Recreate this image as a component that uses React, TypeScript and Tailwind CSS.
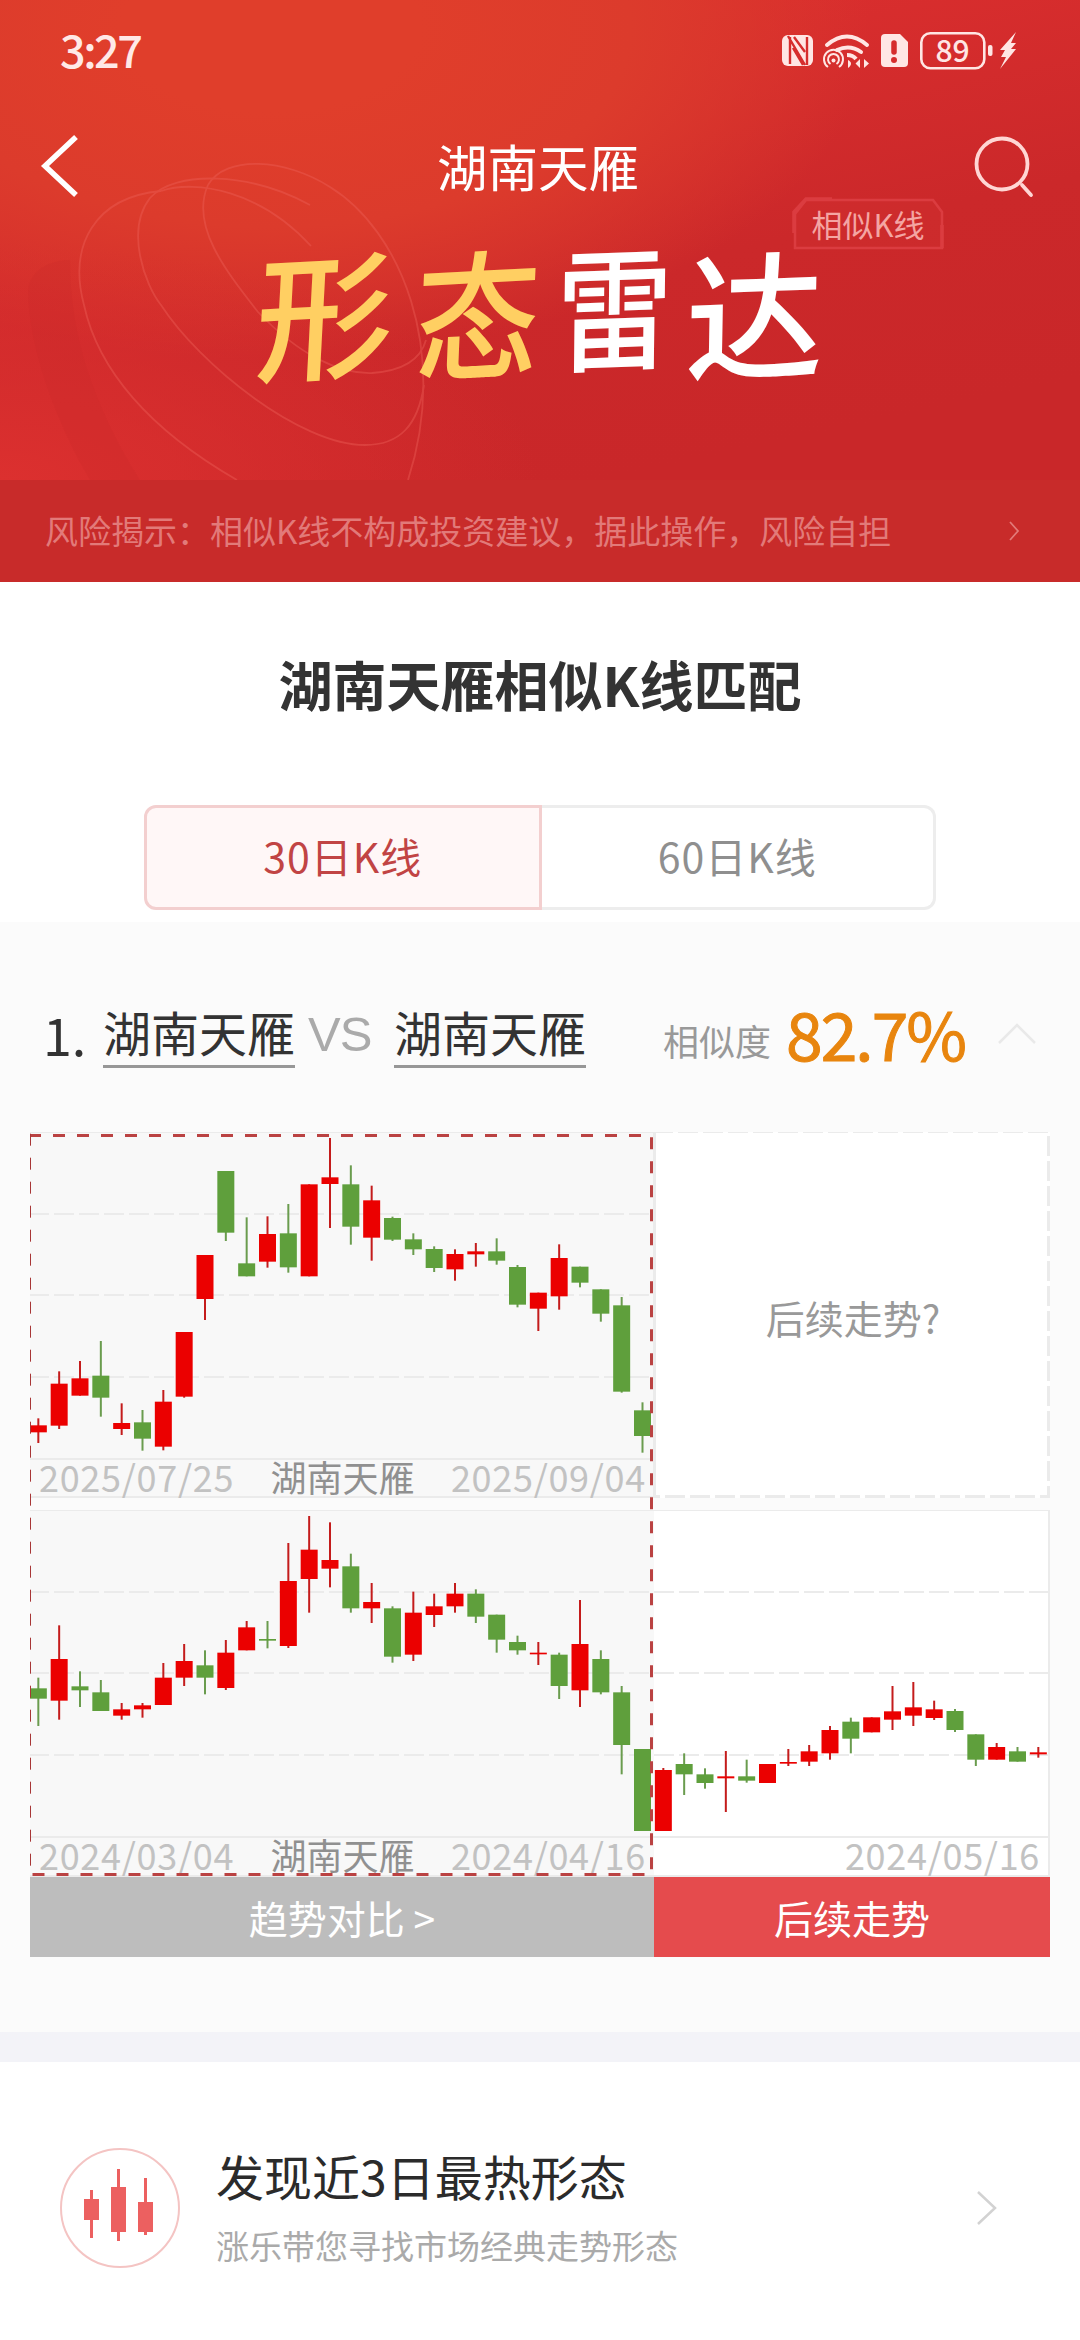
import { useState } from "react";
import clsx from "clsx";

// direction, high, body top, body bottom, low
type Candle = ["r" | "g", number, number, number, number];

const RED = "#eb0000";
const GREEN = "#5f9f3c";
const RED_WICK = "#c41c1c";
const GREEN_WICK = "#6a9c4e";
const SLOT = 62.5;

const current: Candle[] = [
  ["r", 895, 916, 937, 969],
  ["r", 754, 791, 917, 927],
  ["r", 723, 775, 827, 827],
  ["g", 663, 767, 833, 890],
  ["r", 850, 909, 927, 945],
  ["g", 870, 907, 956, 992],
  ["r", 810, 845, 980, 991],
  ["r", 636, 636, 830, 833],
  ["r", 405, 405, 537, 600],
  ["g", 153, 153, 338, 363],
  ["g", 292, 430, 469, 469],
  ["r", 289, 342, 425, 443],
  ["g", 252, 340, 442, 458],
  ["r", 193, 193, 469, 469],
  ["r", 54, 172, 192, 324],
  ["g", 136, 193, 320, 374],
  ["r", 197, 241, 353, 422],
  ["g", 290, 294, 359, 363],
  ["g", 340, 358, 388, 405],
  ["g", 379, 387, 444, 456],
  ["r", 388, 402, 448, 482],
  ["r", 369, 394, 403, 440],
  ["g", 355, 394, 422, 434],
  ["g", 435, 441, 554, 562],
  ["r", 518, 518, 566, 633],
  ["r", 373, 414, 529, 569],
  ["g", 440, 440, 488, 502],
  ["g", 508, 508, 581, 605],
  ["g", 531, 556, 815, 818],
  ["g", 847, 871, 948, 998]
];

const history: Candle[] = [
  ["g", 533, 565, 596, 678],
  ["r", 376, 477, 602, 659],
  ["g", 514, 559, 571, 621],
  ["g", 540, 577, 633, 633],
  ["r", 609, 628, 647, 659],
  ["r", 609, 616, 628, 653],
  ["r", 489, 533, 615, 615],
  ["r", 432, 483, 533, 558],
  ["g", 451, 496, 533, 583],
  ["r", 420, 458, 564, 570],
  ["r", 363, 382, 451, 451],
  ["g", 363, 417, 422, 445],
  ["r", 129, 243, 438, 444],
  ["r", 48, 149, 237, 338],
  ["r", 67, 180, 206, 262],
  ["g", 161, 199, 325, 338],
  ["r", 249, 306, 325, 369],
  ["g", 319, 325, 470, 488],
  ["r", 275, 338, 464, 483],
  ["r", 281, 319, 345, 381],
  ["r", 249, 281, 319, 338],
  ["g", 268, 281, 350, 369],
  ["g", 344, 344, 419, 458],
  ["g", 407, 426, 451, 464],
  ["r", 426, 458, 463, 495],
  ["g", 458, 464, 558, 597],
  ["r", 300, 432, 571, 621],
  ["g", 451, 477, 577, 583],
  ["g", 558, 577, 735, 823],
  ["g", 747, 747, 993, 993],
  ["r", 804, 810, 993, 993],
  ["g", 760, 792, 823, 885],
  ["g", 805, 823, 849, 866],
  ["r", 753, 829, 835, 936],
  ["g", 779, 829, 842, 848],
  ["r", 792, 792, 849, 849],
  ["r", 747, 786, 791, 798],
  ["r", 735, 754, 785, 798],
  ["r", 678, 690, 760, 779],
  ["g", 653, 665, 716, 760],
  ["r", 652, 652, 697, 697],
  ["r", 558, 634, 659, 690],
  ["r", 546, 622, 647, 678],
  ["r", 602, 628, 654, 660],
  ["g", 627, 633, 690, 696],
  ["g", 703, 703, 779, 798],
  ["r", 729, 741, 779, 779],
  ["g", 741, 754, 785, 785],
  ["r", 741, 757, 763, 773]
];

export default function App() {
  const [range, setRange] = useState<30 | 60>(30);

  return (
    <main className="h-[2340px] w-[1080px] overflow-hidden bg-white font-['Noto_Sans_CJK_SC',sans-serif] text-[#333]">
      <Banner />

      <section className="flex h-[340px] flex-col items-center">
        <h2 className="mt-[62px] text-[54px] font-bold leading-[80px] text-[#333]">湖南天雁相似K线匹配</h2>
        <div className="mt-[81px] flex h-[105px] w-[792px] text-[41px] tracking-[1px]">
          <RangeTab label="30日K线" active={range === 30} side="left" onClick={() => setRange(30)} />
          <RangeTab label="60日K线" active={range === 60} side="right" onClick={() => setRange(60)} />
        </div>
      </section>

      <section className="h-[1110px] bg-[#fbfbfb] px-[30px]">
        <MatchHeader />
        <Charts />
        <div className="flex h-20 text-[39px] leading-[76px] text-white">
          <button type="button" className="w-[624px] bg-[#bdbdbd]">趋势对比 &gt;</button>
          <button type="button" className="w-[396px] bg-[#e54b4d]">后续走势</button>
        </div>
      </section>

      <div className="h-[30px] bg-[#f3f3f8]" />

      <HotPatterns />
    </main>
  );
}

function Banner() {
  return (
    <header className="relative h-[582px] bg-[radial-gradient(ellipse_600px_330px_at_25%_5%,#e03e2b_25%,#dc3b2c_60%,transparent_100%),linear-gradient(168deg,#de302f_10%,#cb282a_50%,#c92729_75%)] text-white">
      <BannerLines />

      <div className="relative flex h-[102px] items-center justify-between pl-[60px] pr-[61px] text-[#ffe9e7]">
        <span className="pb-[5px] text-[45px] font-medium tracking-[-2.5px]">3:27</span>
        <StatusIcons />
      </div>

      <nav className="relative flex h-[130px] items-center justify-between pl-[40px] pr-[45px]">
        <svg className="mb-[2px] h-[64px] w-[40px]" viewBox="0 0 40 64" fill="none" stroke="#fff" strokeWidth="5.5">
          <path d="M36 3 5 32l31 29" />
        </svg>
        <h1 className="ml-[23px] pb-[4px] text-[50.500px] leading-[70px]">湖南天雁</h1>
        <svg className="h-[64px] w-[62px]" viewBox="0 0 62 64" fill="none" stroke="#ffd6d4" strokeWidth="3.8">
          <circle cx="29" cy="29" r="25.5" />
          <path d="m49 50 9 10" strokeLinecap="round" />
        </svg>
      </nav>

      <div className="relative flex h-[248px] pl-[247px] pt-[2px] text-[138px] font-medium leading-[150px]">
        <span className="w-[152px] -skew-x-6 -rotate-3 text-center text-[#ffcf62]">形</span>
        <span className="w-[154px] -skew-x-6 -rotate-3 scale-x-90 text-center text-[#ffcf62]">态</span>
        <span className="w-[122px] -skew-x-3 -rotate-2 scale-y-115 text-center text-[116px]">雷</span>
        <span className="w-[158px] -skew-x-3 -rotate-2 text-center">达</span>
      </div>

      <div className="absolute left-[792px] top-[197px] flex h-[53px] w-[152px] items-center justify-center">
        <svg className="absolute inset-0 h-full w-full" viewBox="0 0 152 53" fill="#d9353733" stroke="#db3c40" strokeWidth="2.5">
          <path d="M3 51V17L14 3h127l9 12v36z" />
          <path d="M2 36V15L14 2h26M150 28v23" strokeWidth="3.5" fill="none" />
        </svg>
        <span className="relative text-[31px] leading-[48px] text-[#f4a5a3]">相似K线</span>
      </div>

      <div className="relative flex h-[102px] items-center justify-between bg-[#c82b2a] pl-[45px] pr-[60px] text-[33px] text-[#e27a79]">
        <span>风险揭示：相似K线不构成投资建议，据此操作，风险自担</span>
        <svg className="h-5 w-3" viewBox="0 0 12 20" fill="none" stroke="#e27a79" strokeWidth="1.8">
          <path d="m2 1 8 9-8 9" />
        </svg>
      </div>
    </header>
  );
}

function BannerLines() {
  return (
    <svg className="absolute left-0 top-0 h-[480px] w-[1080px]" viewBox="0 0 1080 480" fill="none">
      <defs>
        <radialGradient id="glow" cx="0" cy="1" r="0.5">
          <stop offset="0" stopColor="#dc302f" />
          <stop offset="1" stopColor="#dc302f" stopOpacity="0" />
        </radialGradient>
      </defs>
      <rect width="1080" height="480" fill="url(#glow)" />
      <path d="M28 290C28 350 60 430 90 480h50C90 400 70 330 70 260c-20 0-40 10-42 30z" fill="#c92a29" opacity=".22" />
      <g stroke="#ee625a" strokeWidth="1.8" opacity=".4">
        <path d="M161 191C95 197 68 245 84 305C98 370 150 430 237 480" />
        <path d="M161 191c35-12 100 0 150 55" />
        <path d="M310 205C250 172 175 170 150 198C125 230 145 285 161 305C200 365 300 445 365 445C400 445 418 425 424 385" />
        <path d="M208 185C190 225 225 270 258 312C300 356 340 374 372 373C400 371 420 362 426 340" />
        <path d="M208 185C225 155 285 158 330 187C400 230 450 350 408 480" />
      </g>
    </svg>
  );
}

function StatusIcons() {
  return (
    <svg className="h-[42px] w-[238px] overflow-visible" viewBox="782 30 238 42" fill="#ffe6e4">
      {/* NFC */}
      <rect x="783" y="35" width="31" height="31" rx="6" />
      <path d="m791 37 0 27M789 36l17 29M808 37v28" stroke="#d62d2d" strokeWidth="2.4" fill="none" />
      <path d="m794 48 10 17M795 37l11 15" stroke="#d62d2d" strokeWidth="2.4" fill="none" />
      {/* wifi with hotspot */}
      <g fill="none" stroke="#ffe6e4">
        <path d="M828 45q20-17 40 0" strokeWidth="4" strokeLinecap="round" />
        <path d="M838 50q13-6 24 2" strokeWidth="4" strokeLinecap="round" />
        <path d="M848 55q6 0 9 4" strokeWidth="4" />
        <path d="M829 67a9.500 9.500 0 1 1 11 0" strokeWidth="2" />
        <path d="M831.500 64a5.500 5.500 0 1 1 6 0" strokeWidth="2" />
      </g>
      <circle cx="834.500" cy="60.500" r="2" />
      <path d="M849 60c4 2 4 5 0 8zM861 59v9l-4.500-4.500zM865 59l5 4.500-5 4.500z" />
      {/* sim */}
      <path d="M886 34h15l8 8v21a4 4 0 0 1-4 4h-19a4 4 0 0 1-4-4V38a4 4 0 0 1 4-4z" />
      <path d="M895 43v9" stroke="#d62d2d" strokeWidth="5.500" strokeLinecap="round" />
      <circle cx="895" cy="60" r="3" fill="#d62d2d" />
      {/* battery */}
      <rect x="922.300" y="33.300" width="63" height="35" rx="9" fill="none" stroke="#ffe6e4" strokeWidth="2.600" />
      <text x="953.500" y="61.500" textAnchor="middle" fontSize="30" fontWeight="500">89</text>
      <rect x="989" y="45" width="4.500" height="11" rx="2" />
      <path d="M1017 32 1001 50h5l-4 7h5l-6 12 16-20h-5l5-6h-5z" />
    </svg>
  );
}

type RangeTabProps = {
  label: string;
  active: boolean;
  side: "left" | "right";
  onClick: () => void;
};

function RangeTab({ label, active, side, onClick }: RangeTabProps) {
  return (
    <button
      type="button"
      onClick={onClick}
      className={clsx(
        "flex-1 border-[3px] pb-[4px]",
        side === "left" ? "rounded-l-xl" : "rounded-r-xl",
        active ? "border-[#f3cfcf] bg-[#fff7f7] text-[#c14444]" : "border-[#ededed] text-[#8f8f8f]",
        !active && (side === "left" ? "border-r-0" : "border-l-0")
      )}
    >
      {label}
    </button>
  );
}

function MatchHeader() {
  return (
    <div className="flex h-[210px] pl-[13px] pt-[76px]">
      <span className="w-[60px] text-[52px] leading-[71px]">1.</span>
      <span className="h-[70px] border-b-[3px] border-[#979797] text-[48px] leading-[66px]">湖南天雁</span>
      <span className="w-[99px] pl-[13px] font-['Liberation_Sans',sans-serif] text-[49px] leading-[73px] tracking-[-1px] text-[#aaa]">VS</span>
      <span className="h-[70px] border-b-[3px] border-[#979797] text-[48px] leading-[66px]">湖南天雁</span>
      <span className="ml-[77px] pt-[6px] text-[36px] leading-[72px] text-[#999]">相似度</span>
      <span className="ml-[15px] w-[182px] text-[66px] leading-[68px] tracking-[-2px] text-[#e8850e] [-webkit-text-stroke:1px_#e8850e]">82.7%</span>
      <svg className="ml-[29px] mt-[24px] h-6 w-10" viewBox="0 0 40 24" fill="none" stroke="#e9e9e9" strokeWidth="2.5">
        <path d="M2 21 20 3l18 18" />
      </svg>
    </div>
  );
}

function Charts() {
  return (
    <div className="relative flex h-[745px] flex-col gap-3">
      <div className="flex h-[366px]">
        <div className="w-[626px] border-b-2 border-r-[3px] border-[#ebebeb] bg-[#f8f8f8]">
          <KLine candles={current} top={36} width={1869} />
          <Labels start="2025/07/25" end="2025/09/04" />
        </div>
        <div className="relative flex flex-1 items-center justify-center bg-white pt-[5px] text-[39px] text-[#999]">
          后续走势?
          <svg className="absolute inset-0 h-full w-full" viewBox="0 0 394 366" fill="none" stroke="#ebebeb" strokeDasharray="20 5">
            <path d="M-3 .5H394" />
            <path d="M392.500 4V366" strokeWidth="3" />
            <path d="M-16 364.500H394" strokeWidth="3" />
          </svg>
        </div>
      </div>

      <div className="flex h-[367px] flex-col border-r-2 border-[#ebebeb] bg-[linear-gradient(90deg,#f8f8f8_624px,#fff_624px)]">
        <KLine candles={history} top={30} width={3054} />
        <div className="flex h-[39px] justify-between border-b-2 border-[#ebebeb]">
          <Labels start="2024/03/04" end="2024/04/16" />
          <span className="-mt-[9px] h-[46px] pr-[8px] text-[36px] leading-[50px] tracking-[0.7px] text-[#c2c2c2]">2024/05/16</span>
        </div>
      </div>

      <SelectionFrame />
    </div>
  );
}

// three chart units make one pixel
function KLine({ candles, top, width }: { candles: Candle[]; top: number; width: number }) {
  return (
    <svg className="block h-[328px] shrink-0" style={{ width: width / 3 }} viewBox={`0 ${top} ${width} 984`}>
      <path d={`M0 ${top + 1.5}H${width}`} stroke="#ebebeb" strokeWidth="3" />
      <path d={`M0 ${top + 981}H${width}`} stroke="#ebebeb" strokeWidth="6" />
      {[246, 489, 735].map((y) => (
        <path key={y} d={`M-3 ${top + y}H${width}`} stroke="#ebebeb" strokeWidth="6" strokeDasharray="60 15" />
      ))}
      {candles.map(([dir, high, bodyTop, bodyBottom, low], i) => {
        const x = 25 + i * SLOT;
        return (
          <g key={i}>
            <rect x={x - 3} y={high} width="6" height={low - high} fill={dir === "r" ? RED_WICK : GREEN_WICK} />
            <rect x={x - 25.5} y={bodyTop} width="51" height={bodyBottom - bodyTop} fill={dir === "r" ? RED : GREEN} />
          </g>
        );
      })}
    </svg>
  );
}

function Labels({ start, end }: { start: string; end: string }) {
  return (
    <div className="-mt-[9px] flex h-[46px] w-[624px] justify-between pl-[9px] pr-[8px] text-[36px] leading-[50px] text-[#c2c2c2]">
      <span className="tracking-[0.7px]">{start}</span>
      <span className="text-[#909090]">湖南天雁</span>
      <span className="tracking-[0.7px]">{end}</span>
    </div>
  );
}

function SelectionFrame() {
  return (
    <svg className="absolute left-0 top-0 h-[745px] w-[626px]" viewBox="0 0 626 745" fill="none" stroke="#ba4242" strokeWidth="3" strokeDasharray="12 12">
      <path d="M-1 3.500H622" />
      <path d="M.5 1.700V740" stroke="#a83636" strokeWidth="1" />
      <path d="M621.500 5.300V740" />
      <path d="M2.500 742.500H618" />
    </svg>
  );
}

function HotPatterns() {
  return (
    <section className="flex h-[278px] items-center pb-0 pl-[60px] pr-[82px] pt-[14px]">
      <svg className="h-[120px] w-[120px]" viewBox="0 0 120 120">
        <circle cx="60" cy="60" r="59" fill="#fff" stroke="#f4c4c3" strokeWidth="2" />
        <g fill="#ec6060">
          <path d="M30 42h3v48h-3zM24 51h15v21H24z" />
          <path d="M57 21h3v72h-3zM51 39h15v45H51z" />
          <path d="M84 30h3v57h-3zM78 54h15v30H78z" />
        </g>
      </svg>
      <div className="ml-[36px] flex-1">
        <h3 className="text-[48px] leading-[66px] text-[#2b2b2b]">发现近3日最热形态</h3>
        <p className="mt-[8px] text-[33px] leading-[58px] text-[#aaa]">涨乐带您寻找市场经典走势形态</p>
      </div>
      <svg className="h-9 w-[22px]" viewBox="0 0 22 36" fill="none" stroke="#d2d2d2" strokeWidth="2.5">
        <path d="m2 2 17 16L2 34" />
      </svg>
    </section>
  );
}
